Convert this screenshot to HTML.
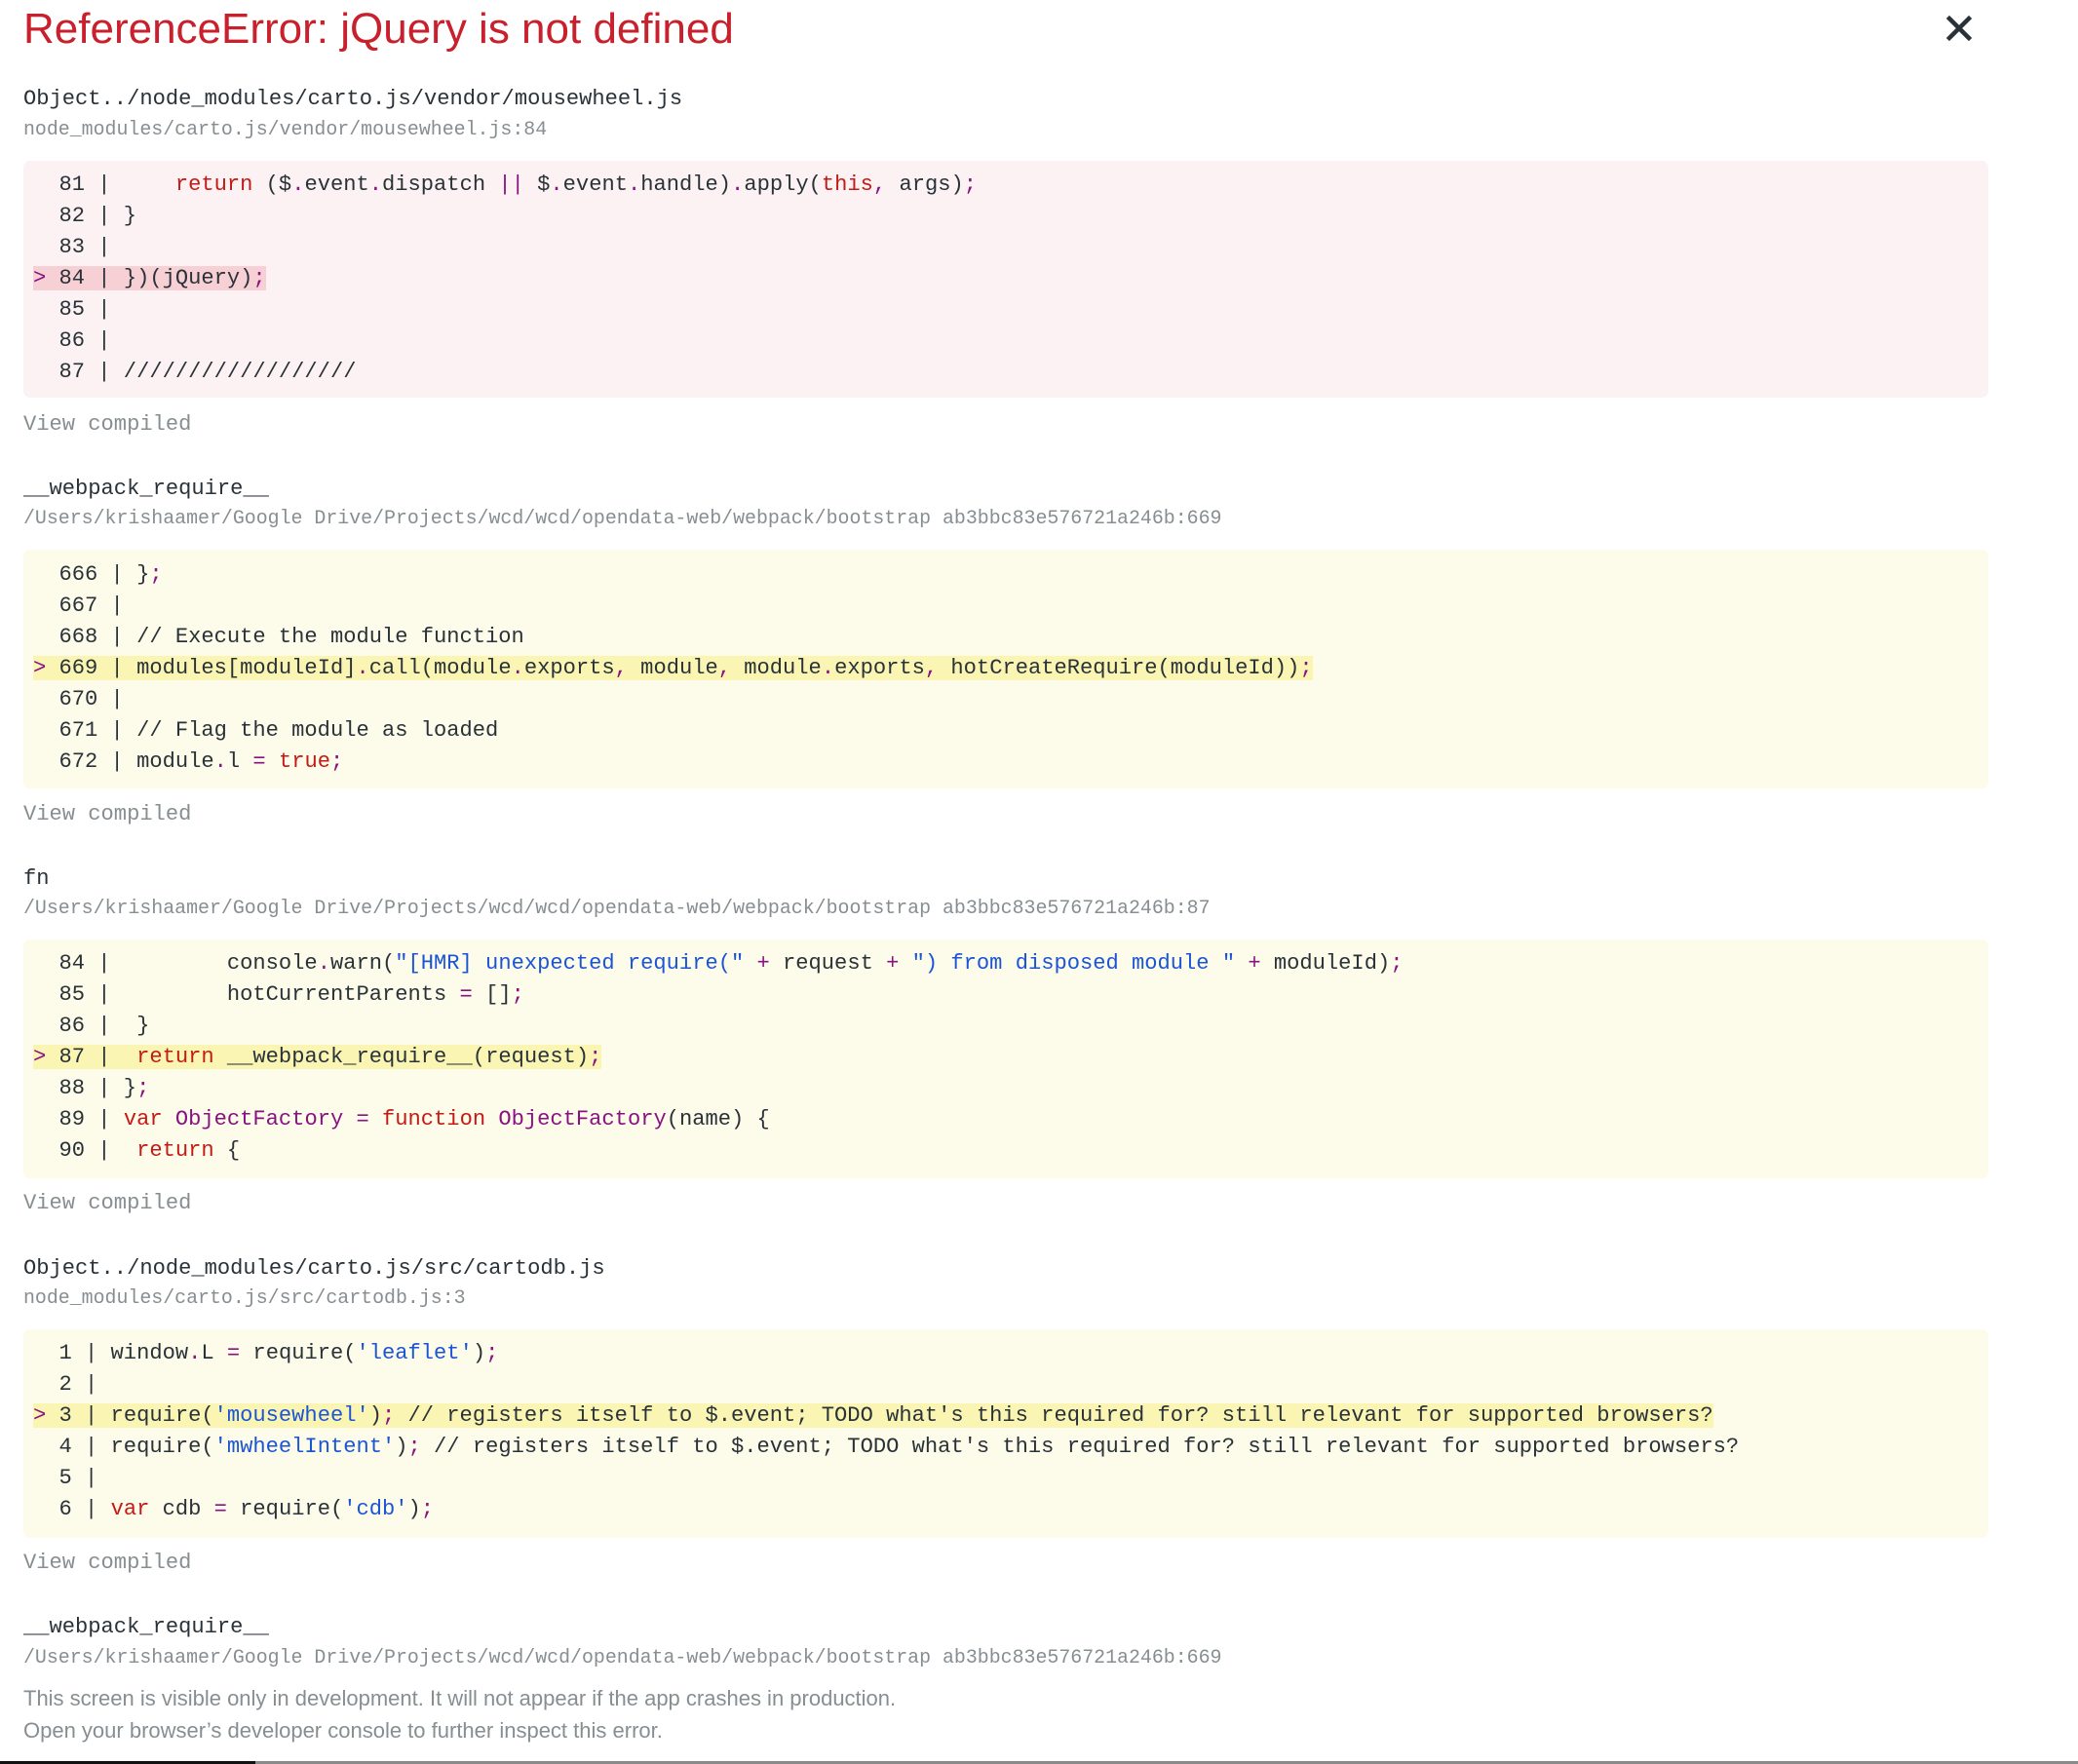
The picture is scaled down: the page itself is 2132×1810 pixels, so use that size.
<!DOCTYPE html>
<html><head><meta charset="utf-8"><style>
*{margin:0;padding:0;box-sizing:border-box}
html,body{width:2132px;height:1810px;background:#fff;overflow:hidden;position:relative}
.a{position:absolute;left:24px;white-space:pre;line-height:32px}
.t{font-family:"Liberation Sans",Arial,sans-serif;font-size:44px;color:#c8202c;top:8px;line-height:44px}
.n{font-family:"Liberation Mono",monospace;font-size:22.1px;color:#293238}
.f{font-family:"Liberation Mono",monospace;font-size:19.9px;color:#878e91}
.v{font-family:"Liberation Mono",monospace;font-size:22.1px;color:#878e91}
.box{position:absolute;left:24px;width:2016px;border-radius:7px}
.pk{background:#fcf2f3}
.yl{background:#fdfbe9}
pre{position:absolute;left:34px;font-family:"Liberation Mono",monospace;font-size:22.1px;line-height:32px;color:#293238}
.hp{background:#f6d0d4}
.hy{background:#fbf5b4}
.k{color:#c41a16}
.p{color:#881280}
.s{color:#1a55d6}
.ft{position:absolute;left:24px;font-family:"Liberation Sans",Arial,sans-serif;font-size:22px;color:#878e91;line-height:32px}
</style></head><body>
<div class="a t">ReferenceError: jQuery is not defined</div>
<svg style="position:absolute;left:1996px;top:15px" width="28" height="28" viewBox="0 0 28 28"><path d="M4 4L24 24M24 4L4 24" stroke="#293238" stroke-width="4.5" stroke-linecap="square"/></svg>

<div class="a n" style="top:86px">Object../node_modules/carto.js/vendor/mousewheel.js</div>
<div class="a f" style="top:117px">node_modules/carto.js/vendor/mousewheel.js:84</div>
<div class="box pk" style="top:165px;height:243px"></div>
<pre style="top:174px">  81 |     <span class="k">return</span> ($<span class="p">.</span>event<span class="p">.</span>dispatch <span class="p">||</span> $<span class="p">.</span>event<span class="p">.</span>handle)<span class="p">.</span>apply(<span class="k">this</span><span class="p">,</span> args)<span class="p">;</span>
  82 | }
  83 |
<span class="hp"><span class="p">&gt;</span> 84 | })(jQuery)<span class="p">;</span></span>
  85 |
  86 |
  87 | //////////////////</pre>
<div class="a v" style="top:420px">View compiled</div>

<div class="a n" style="top:486px">__webpack_require__</div>
<div class="a f" style="top:516px">/Users/krishaamer/Google Drive/Projects/wcd/wcd/opendata-web/webpack/bootstrap ab3bbc83e576721a246b:669</div>
<div class="box yl" style="top:564px;height:245px"></div>
<pre style="top:574px">  666 | }<span class="p">;</span>
  667 |
  668 | // Execute the module function
<span class="hy"><span class="p">&gt;</span> 669 | modules[moduleId]<span class="p">.</span>call(module<span class="p">.</span>exports<span class="p">,</span> module<span class="p">,</span> module<span class="p">.</span>exports<span class="p">,</span> hotCreateRequire(moduleId))<span class="p">;</span></span>
  670 |
  671 | // Flag the module as loaded
  672 | module<span class="p">.</span>l <span class="p">=</span> <span class="k">true</span><span class="p">;</span></pre>
<div class="a v" style="top:820px">View compiled</div>

<div class="a n" style="top:886px">fn</div>
<div class="a f" style="top:916px">/Users/krishaamer/Google Drive/Projects/wcd/wcd/opendata-web/webpack/bootstrap ab3bbc83e576721a246b:87</div>
<div class="box yl" style="top:964px;height:245px"></div>
<pre style="top:973px">  84 |         console<span class="p">.</span>warn(<span class="s">"[HMR] unexpected require("</span> <span class="p">+</span> request <span class="p">+</span> <span class="s">") from disposed module "</span> <span class="p">+</span> moduleId)<span class="p">;</span>
  85 |         hotCurrentParents <span class="p">=</span> []<span class="p">;</span>
  86 |  }
<span class="hy"><span class="p">&gt;</span> 87 |  <span class="k">return</span> __webpack_require__(request)<span class="p">;</span></span>
  88 | }<span class="p">;</span>
  89 | <span class="k">var</span> <span class="p">ObjectFactory</span> <span class="p">=</span> <span class="k">function</span> <span class="p">ObjectFactory</span>(name) {
  90 |  <span class="k">return</span> {</pre>
<div class="a v" style="top:1219px">View compiled</div>

<div class="a n" style="top:1286px">Object../node_modules/carto.js/src/cartodb.js</div>
<div class="a f" style="top:1316px">node_modules/carto.js/src/cartodb.js:3</div>
<div class="box yl" style="top:1364px;height:214px"></div>
<pre style="top:1373px">  1 | window<span class="p">.</span>L <span class="p">=</span> require(<span class="s">'leaflet'</span>)<span class="p">;</span>
  2 |
<span class="hy"><span class="p">&gt;</span> 3 | require(<span class="s">'mousewheel'</span>)<span class="p">;</span> // registers itself to $.event; TODO what's this required for? still relevant for supported browsers?</span>
  4 | require(<span class="s">'mwheelIntent'</span>)<span class="p">;</span> // registers itself to $.event; TODO what's this required for? still relevant for supported browsers?
  5 |
  6 | <span class="k">var</span> cdb <span class="p">=</span> require(<span class="s">'cdb'</span>)<span class="p">;</span></pre>
<div class="a v" style="top:1588px">View compiled</div>

<div class="a n" style="top:1654px">__webpack_require__</div>
<div class="a f" style="top:1685px">/Users/krishaamer/Google Drive/Projects/wcd/wcd/opendata-web/webpack/bootstrap ab3bbc83e576721a246b:669</div>

<div class="ft" style="top:1727px">This screen is visible only in development. It will not appear if the app crashes in production.</div>
<div class="ft" style="top:1760px">Open your browser’s developer console to further inspect this error.</div>

<div style="position:absolute;left:0;top:1807px;width:262px;height:3px;background:#111"></div>
<div style="position:absolute;left:262px;top:1807px;width:1870px;height:3px;background:#8a8a8a"></div>
</body></html>
